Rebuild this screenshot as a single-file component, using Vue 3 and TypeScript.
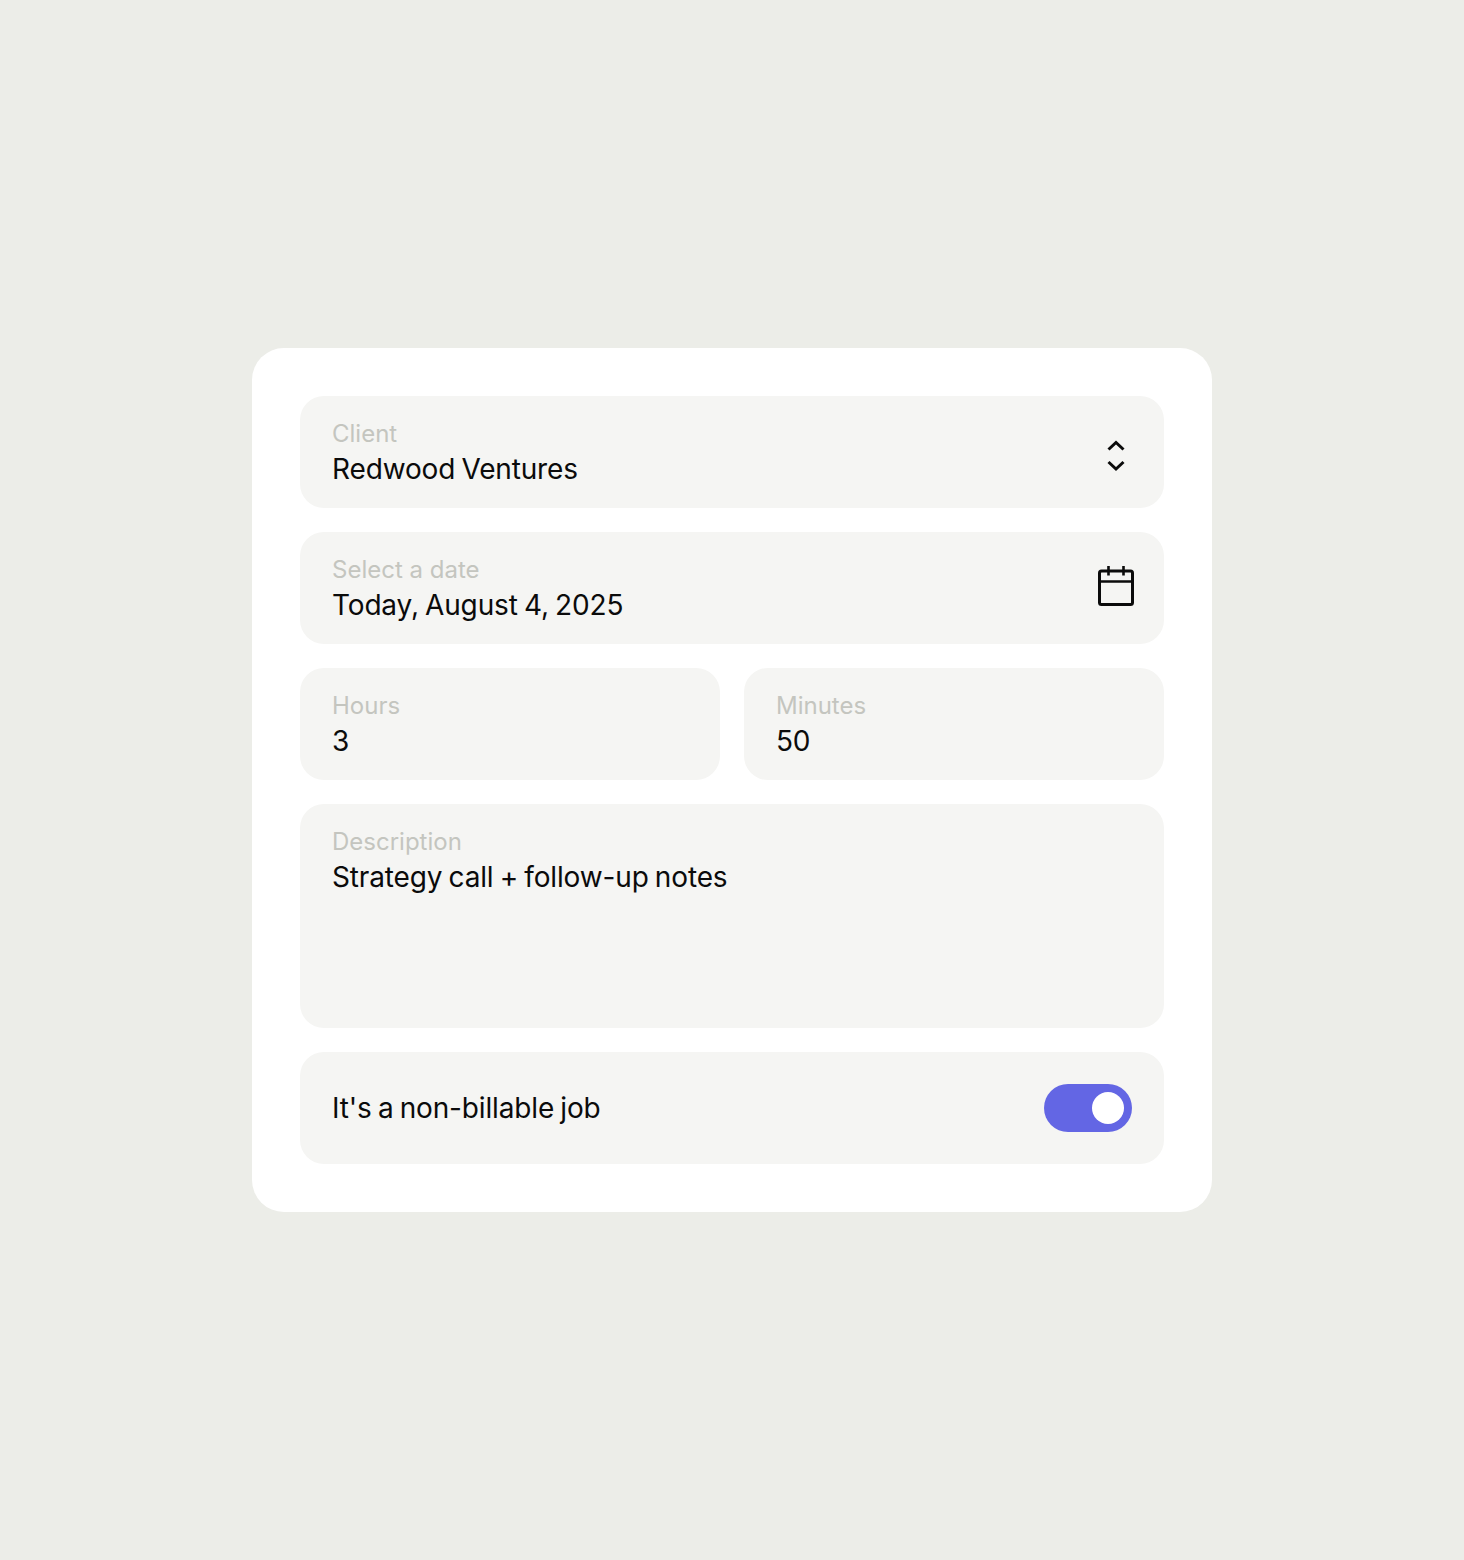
<script setup lang="ts">
const pad = 0
</script>

<template>
  <main class="page">
    <form class="card" @submit.prevent>
      <div class="field">
        <div class="stack">
          <span class="label">Client</span>
          <span class="value">Redwood Ventures</span>
        </div>
        <svg class="updown" width="36" height="40" viewBox="0 0 36 40" fill="none" stroke="#0b0b0b" stroke-width="3">
          <path d="M10.500 13.500 18 6.500l7.500 7" />
          <path d="M10.500 26l7.500 7 7.500-7" />
        </svg>
      </div>
      <div class="field">
        <div class="stack">
          <span class="label">Select a date</span>
          <span class="value">Today, August 4, 2025</span>
        </div>
        <svg class="cal" width="36" height="40" viewBox="0 0 36 40" fill="none" stroke="#0b0b0b" stroke-width="3">
          <rect x="1.500" y="5" width="33" height="33.500" rx="2" />
          <path d="M1.500 15.500h33" stroke-width="2.400" />
          <path d="M10.500 0v9.500M25.500 0v9.500" stroke-width="2.600" />
        </svg>
      </div>
      <div class="pair">
        <div class="field">
          <div class="stack">
            <span class="label">Hours</span>
            <span class="value">3</span>
          </div>
        </div>
        <div class="field">
          <div class="stack">
            <span class="label">Minutes</span>
            <span class="value">50</span>
          </div>
        </div>
      </div>
      <div class="field tall">
        <div class="stack">
          <span class="label">Description</span>
          <span class="value">Strategy call + follow-up notes</span>
        </div>
      </div>
      <div class="field center">
        <span class="value">It's a non-billable job</span>
        <span class="toggle"><span class="knob"></span></span>
      </div>
    </form>
  </main>
</template>

<style scoped>
.page {
  width: 1464px;
  height: 1560px;
  background: #ecede8;
  display: flex;
  align-items: center;
  justify-content: center;
  font-family: Inter, "Liberation Sans", Arial, sans-serif;
}
.card {
  width: 960px;
  box-sizing: border-box;
  padding: 48px;
  background: #fff;
  border-radius: 32px;
  display: flex;
  flex-direction: column;
  gap: 24px;
}
.pair {
  display: grid;
  grid-template-columns: 1fr 1fr;
  gap: 24px;
}
.field {
  height: 112px;
  box-sizing: border-box;
  padding: 20px 30px 20px 32px;
  background: #f5f5f3;
  border-radius: 24px;
  display: flex;
  justify-content: space-between;
  align-items: center;
}
.field.tall {
  height: 224px;
}
.field.center .value {
  line-height: 50px;
}
.stack {
  display: flex;
  flex-direction: column;
  align-self: flex-start;
}
.label {
  font-size: 24px;
  line-height: 36px;
  color: #c4c5bf;
}
.value {
  font-size: 28px;
  line-height: 34px;
  letter-spacing: -0.15px;
  word-spacing: -1.5px;
  color: #0b0b0b;
}
.updown {
  transform: translateY(4px);
}
.cal {
  transform: translateY(-2px);
}
.toggle {
  width: 88px;
  height: 48px;
  border-radius: 24px;
  background: #6366e4;
  display: flex;
  align-items: center;
  justify-content: flex-end;
  padding: 0 8px;
  box-sizing: border-box;
  margin-right: 2px;
}
.knob {
  width: 32px;
  height: 32px;
  border-radius: 50%;
  background: #fff;
}
</style>
